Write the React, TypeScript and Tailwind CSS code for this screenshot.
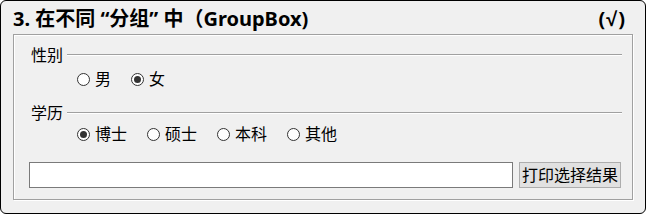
import React, { useState } from "react";

const cn = "font-['Noto_Sans','Noto_Sans_CJK_SC',sans-serif]";

const Radio = ({ checked, label, onClick }: { checked: boolean; label: string; onClick: () => void }) => (
    <button type="button" onClick={onClick} className="flex items-center gap-[5px] h-[16px]">
        <span className="w-[13px] h-[13px] rounded-full border border-[#333] bg-white flex items-center justify-center">
            {checked && <span className="w-[7px] h-[7px] rounded-full bg-[#333]"></span>}
        </span>
        <span className="text-[16px] leading-[16px] text-black">{label}</span>
    </button>
);

const GroupHeader = ({ title }: { title: string }) => (
    <div className="flex items-center h-[16px] pl-[17px] pr-[10px]">
        <span className="text-[16px] leading-[16px] text-black">{title}</span>
        <div className="flex-1 ml-[4px] border-t border-[#a0a0a0] border-b border-b-white"></div>
    </div>
);

const App = () => {
    const [gender, setGender] = useState("女");
    const [edu, setEdu] = useState("博士");

    return (
        <div className={`w-[646px] h-[214px] bg-[#f0f0f0] border border-black rounded-[6px] ${cn}`}>
            <div className="flex items-center justify-between h-[33px] pl-[12px] pr-[19px] pt-[2px]">
                <h1 className="text-[20px] font-bold text-black">3. 在不同 “分组” 中（GroupBox)</h1>
                <span className="text-[20px] font-bold text-black tracking-[1px]">
                    (<span className="font-['Liberation_Sans',sans-serif]">√</span>)
                </span>
            </div>

            <div className="mx-[12px] h-[166px] border border-[#a0a0a0] shadow-[inset_1px_1px_0_#fff,1px_1px_0_#fff] pt-[12px]">
                <GroupHeader title="性别" />
                <div className="flex gap-[20px] pl-[63px] mt-[8px]">
                    {["男", "女"].map((g) => (
                        <Radio key={g} label={g} checked={gender === g} onClick={() => setGender(g)} />
                    ))}
                </div>

                <div className="mt-[18px]">
                    <GroupHeader title="学历" />
                </div>
                <div className="flex gap-[20px] pl-[63px] mt-[5px]">
                    {["博士", "硕士", "本科", "其他"].map((e) => (
                        <Radio key={e} label={e} checked={edu === e} onClick={() => setEdu(e)} />
                    ))}
                </div>

                <div className="flex gap-[6px] pl-[15px] pr-[11px] mt-[20px]">
                    <input className="flex-1 h-[26px] bg-white border border-[#7a7a7a] outline-none px-1 text-[14px]" />
                    <button type="button" className="w-[102px] h-[26px] bg-[#e1e1e1] border border-[#adadad] text-[16px] leading-[16px] text-black">
                        打印选择结果
                    </button>
                </div>
            </div>
        </div>
    );
};

export default App;
